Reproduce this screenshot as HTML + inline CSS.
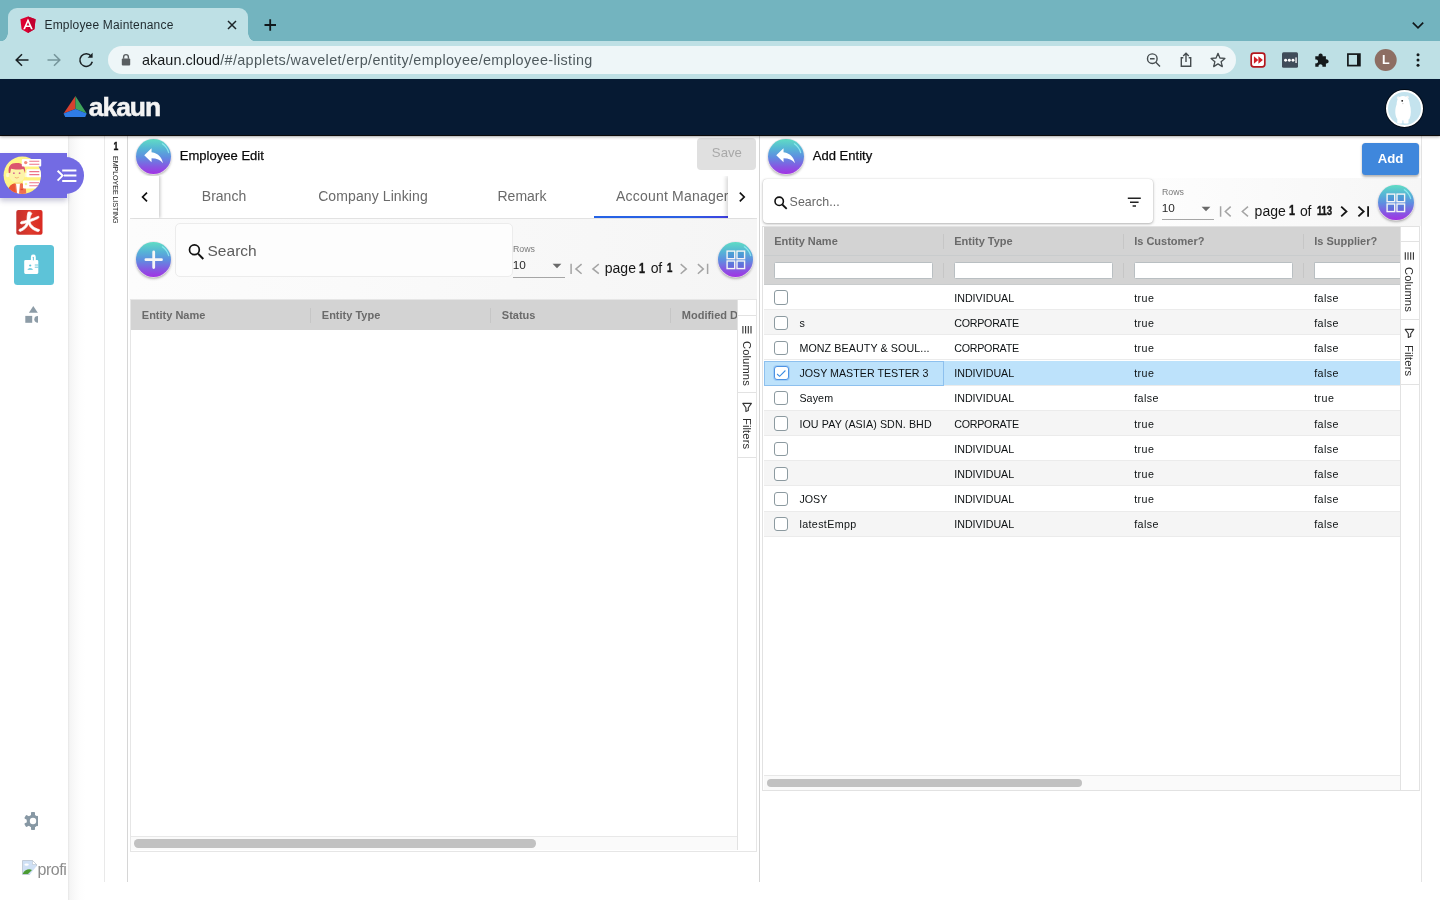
<!DOCTYPE html>
<html lang="en">
<head>
<meta charset="utf-8">
<title>Employee Maintenance</title>
<style>
*{box-sizing:border-box;margin:0;padding:0}
html,body{width:1440px;height:900px;overflow:hidden;background:#fff}
body{font-family:"Liberation Sans",sans-serif;color:#000;position:relative}
.abs{position:absolute}
#stage{position:absolute;left:0;top:0;width:1440px;height:900px;overflow:hidden;background:#fff;will-change:transform}
/* ---------- browser chrome ---------- */
#tabstrip{left:0;top:0;width:1440px;height:42px;background:#73b4bf}
#toolbar{left:0;top:41px;width:1440px;height:38px;background:#bee0e5}
#tab{left:8px;top:8px;width:240px;height:34px;background:#bee0e5;border-radius:9px 9px 0 0}
#tab:before,#tab:after{content:"";position:absolute;bottom:0;width:9px;height:9px}
#tab:before{left:-9px;background:radial-gradient(circle at 0 0,transparent 8.5px,#bee0e5 9px)}
#tab:after{right:-9px;background:radial-gradient(circle at 100% 0,transparent 8.5px,#bee0e5 9px)}
#tabtitle{left:44.5px;top:17px;font-size:12px;line-height:16px;color:#1f2a2e;letter-spacing:.18px;white-space:nowrap}
#urlpill{left:108px;top:46px;width:1128px;height:28px;border-radius:14px;background:#eef6f8}
#url{left:142px;top:51px;font-size:14.4px;line-height:18px;color:#4f5a5e;white-space:nowrap;letter-spacing:.36px}
#url b{font-weight:400;color:#15191b;letter-spacing:.05px}
/* ---------- app header ---------- */
#apphead{left:0;top:79px;width:1440px;height:56.200px;background:#061a33;box-shadow:0 .8px .6px rgba(0,0,0,.95),0 2px 3px rgba(0,0,0,.3);z-index:5}
#brand{z-index:6;left:88.800px;top:91.900px;font-size:26.500px;line-height:30px;font-weight:700;color:#f3f3f3;letter-spacing:-1.050px;white-space:nowrap;-webkit-text-stroke:.55px #f3f3f3;transform:scaleY(.95);transform-origin:0 24.200px}
/* ---------- left rail ---------- */
#rail2{left:68px;top:135px;width:37px;height:765px;background:linear-gradient(90deg,#e4e4e4 0,#efefef 1px,#f5f5f5 2px,#f9f9f9 6px,#fdfdfd 11px,#fff 17px,#fff 100%)}
#railline1{left:104px;top:135px;width:1px;height:747px;background:#e9e9e9}
#railline2{left:127px;top:135px;width:1px;height:747px;background:#d6d6d6}
#vline{left:759px;top:135px;width:1px;height:747px;background:#d4d4d4}
#rline{left:1421px;top:135px;width:1px;height:747px;background:#e4e4e4}

/* ---------- shared widgets ---------- */
.fab{position:absolute;width:35.400px;height:35.400px;border-radius:50%;background:linear-gradient(180deg,#60dcc4 0%,#56b4d6 28%,#5f8de0 52%,#8559e2 78%,#a233e4 100%);box-shadow:0 0 0 .7px rgba(236,228,238,.95),0 1.800px 2.500px rgba(0,0,0,.32)}
.fab svg{position:absolute;left:0;top:0}
.pp{font-family:"Liberation Sans",sans-serif;white-space:nowrap}
.ttl{font-size:13px;line-height:16px;color:#0b0b0b;letter-spacing:.02px;-webkit-text-stroke:.25px #0b0b0b}
.tablbl{font-size:14px;line-height:18px;color:#6a6a6a;top:187.400px}
.pg{font-size:14px;line-height:16px;color:#161616}
.pgb{font-weight:700;font-size:14.500px;transform:scaleX(.74);transform-origin:0 50%;-webkit-text-stroke:.45px #161616}
.hd{background:#d3d3d3}
.hdt{font-size:11px;line-height:14px;font-weight:700;color:#6a6a6a;letter-spacing:0}
.cell{font-size:10.700px;line-height:14px;color:#0e1214}
.cb{width:14.400px;height:14.400px;border:1.200px solid #8c9aa0;border-radius:3px;background:#fff}
.side{font-size:11.200px;line-height:12px;color:#2b2b2b;letter-spacing:.1px}
.vtxt{writing-mode:vertical-rl;white-space:nowrap}
</style>
</head>
<body>
<div id="stage">

<!-- ======= browser chrome ======= -->
<div id="tabstrip" class="abs"></div>
<div id="toolbar" class="abs"></div>
<div id="tab" class="abs"></div>
<div id="tabtitle" class="abs">Employee Maintenance</div>
<div id="urlpill" class="abs"></div>
<div id="url" class="abs"><b>akaun.cloud</b>/#/applets/wavelet/erp/entity/employee/employee-listing</div>

<svg class="abs" style="left:0;top:0" width="1440" height="79" viewBox="0 0 1440 79">
  <!-- angular favicon -->
  <path d="M28 16.5 L35.6 19.2 L34.4 29.3 L28 33 L21.6 29.3 L20.4 19.2 Z" fill="#dd0031"/>
  <path d="M28 16.5 L35.6 19.2 L34.4 29.3 L28 33 Z" fill="#c3002f"/>
  <path d="M28 18.6 L23.2 29.3 H25 L26 26.9 H30 L31 29.3 H32.8 Z M28 22.2 L29.4 25.5 H26.6 Z" fill="#fff" fill-rule="evenodd"/>
  <!-- tab close -->
  <path d="M228 21 L236 29 M236 21 L228 29" stroke="#1d2528" stroke-width="1.5" fill="none"/>
  <!-- new tab plus -->
  <path d="M264.500 25 H276 M270.200 19.300 V30.700" stroke="#10181b" stroke-width="1.800" fill="none"/>
  <!-- tab search chevron -->
  <path d="M1412.800 22.700 L1418 27.800 L1423.200 22.700" stroke="#10181b" stroke-width="1.700" fill="none"/>
  <!-- back -->
  <path d="M28.500 60 H16.500 M22 54.200 L16.200 60 L22 65.800" stroke="#1a2124" stroke-width="1.550" fill="none"/>
  <!-- forward (disabled) -->
  <path d="M47.500 60 H59.500 M54 54.200 L59.800 60 L54 65.800" stroke="#76959b" stroke-width="1.550" fill="none"/>
  <!-- reload -->
  <path d="M91.200 56.200 A6.300 6.300 0 1 0 92.300 61.800" stroke="#1a2124" stroke-width="1.550" fill="none"/>
  <path d="M92.600 52.800 V57.800 H87.600 Z" fill="#1a2124"/>
  <!-- lock -->
  <rect x="121.800" y="58.500" width="8.400" height="7" rx="1" fill="#5a5f62"/>
  <path d="M123.600 58.800 V57 A2.400 2.400 0 0 1 128.400 57 V58.800" stroke="#5a5f62" stroke-width="1.400" fill="none"/>
  <!-- zoom out magnifier -->
  <circle cx="1152.300" cy="58.700" r="4.800" stroke="#454c4f" stroke-width="1.400" fill="none"/>
  <path d="M1155.800 62.300 L1160 66.500 M1150 58.700 H1154.600" stroke="#454c4f" stroke-width="1.400" fill="none"/>
  <!-- share -->
  <path d="M1183.300 57.700 H1181.300 V66.300 H1190.700 V57.700 H1188.700 M1186 62 V53.400 M1183.200 56 L1186 53.200 L1188.800 56" stroke="#454c4f" stroke-width="1.400" fill="none"/>
  <!-- star -->
  <path d="M1218 53.300 L1219.900 58 L1224.900 58.400 L1221.100 61.700 L1222.300 66.600 L1218 63.900 L1213.700 66.600 L1214.900 61.700 L1211.100 58.400 L1216.100 58 Z" stroke="#454c4f" stroke-width="1.300" fill="none" stroke-linejoin="round"/>
  <!-- red extension -->
  <rect x="1251.200" y="53.200" width="13.600" height="13.600" rx="2.600" fill="#fff" stroke="#b3161c" stroke-width="1.700"/>
  <path d="M1253.900 56.300 L1258.300 60 L1253.900 63.700 Z M1258.400 56.300 L1262.900 60 L1258.400 63.700 Z" fill="#d21f26"/>
  <!-- dark extension -->
  <rect x="1282" y="52.300" width="16" height="15.400" rx="1.500" fill="#3f4c5a"/>
  <circle cx="1285.600" cy="60.200" r="1.450" fill="#fff"/><circle cx="1289.300" cy="60.200" r="1.450" fill="#fff"/><circle cx="1293" cy="60.200" r="1.450" fill="#fff"/>
  <rect x="1295.400" y="57.400" width="1.300" height="5.600" fill="#fff"/>
  <!-- puzzle -->
  <path d="M1315.300 56.200 H1318.600 A2.100 2.100 0 1 1 1322.600 56.200 H1325.900 V59.400 A2.100 2.100 0 1 1 1325.900 63.400 V66.800 H1322.400 A2 2 0 1 0 1318.600 66.800 H1315.300 V63.300 A2 2 0 1 0 1315.300 59.600 Z" fill="#14191b"/>
  <!-- side panel -->
  <rect x="1347.900" y="54.100" width="12" height="11.500" stroke="#14191b" stroke-width="1.700" fill="none"/>
  <rect x="1357" y="54.100" width="3" height="11.500" fill="#14191b"/>
  <!-- profile -->
  <circle cx="1385.700" cy="60" r="11" fill="#8d6e63"/>
  <text x="1385.700" y="64.300" text-anchor="middle" font-family="Liberation Sans, sans-serif" font-size="12.500" font-weight="700" fill="#fff">L</text>
  <!-- menu dots -->
  <circle cx="1418" cy="54.700" r="1.500" fill="#14191b"/><circle cx="1418" cy="60" r="1.500" fill="#14191b"/><circle cx="1418" cy="65.300" r="1.500" fill="#14191b"/>
</svg>
<!--CHROME-ICONS-->

<!-- ======= app header ======= -->
<div id="apphead" class="abs"></div>
<div id="brand" class="abs">akaun</div>

<svg class="abs" style="left:60px;top:92px;z-index:6" width="32" height="30" viewBox="60 92 32 30">
  <path d="M75.400 96 L63.600 113.600 L75.500 109 Z" fill="#d8412f"/>
  <path d="M75.400 96 L75.500 109 L86.700 113.600 Z" fill="#3fa35c"/>
  <path d="M63.600 113.600 L75.500 109 L86.700 113.600 L85.200 117 L65.200 117 Z" fill="#2f7ce6"/>
</svg>
<div class="abs" style="z-index:6;left:1385.600px;top:89.800px;width:37px;height:37px;border-radius:50%;background:#c4e3ee;border:2px solid #fff;box-shadow:0 0 0 1px rgba(0,0,0,.55)"></div>
<svg class="abs" style="z-index:6;left:1384.700px;top:89.800px" width="37" height="37" viewBox="0 0 37 37">
  <circle cx="13.300" cy="7.800" r="1.500" fill="#f4f4f4"/><circle cx="22.300" cy="7.300" r="1.500" fill="#f4f4f4"/>
  <path d="M18 6 C22.500 6 24.500 9.500 24.800 14.500 C26.300 19 26.300 25 24.500 28.800 C23 31 13.500 31 12 28.800 C9.800 25 9.800 19 11.600 14.500 C11.900 9.500 13.500 6 18 6 Z" fill="#fff"/>
  <rect x="12.300" y="28.500" width="5" height="5" rx="1.200" fill="#fff"/><rect x="18.500" y="28.500" width="5" height="5" rx="1.200" fill="#fff"/>
  <circle cx="17.200" cy="10.800" r=".9" fill="#111"/>
  <path d="M17 13.600 h1.600" stroke="#bbb" stroke-width=".6"/>
</svg>
<!--HEADER-ICONS-->

<!-- ======= left rail ======= -->
<div id="rail2" class="abs"></div>
<div id="railline1" class="abs"></div>
<div id="railline2" class="abs"></div>
<div id="vline" class="abs"></div>
<div id="rline" class="abs"></div>

<!-- purple active pill -->
<div class="abs" style="left:0;top:153px;width:67.300px;height:44.500px;background:#736be3;box-shadow:0 3px 5px rgba(60,60,120,.28)"></div>
<div class="abs" style="left:40px;top:157.200px;width:44.200px;height:36.400px;background:#736be3;border-radius:0 18.200px 18.200px 0"></div>
<svg class="abs" style="left:0;top:150px" width="90" height="50" viewBox="0 150 90 50">
  <defs>
    <clipPath id="avc"><circle cx="22.300" cy="175.300" r="18.700"/></clipPath>
    <linearGradient id="avg" x1="0" y1="0" x2="1" y2="1"><stop offset="0" stop-color="#fff88e"/><stop offset="1" stop-color="#ffee78"/></linearGradient>
  </defs>
  <circle cx="22.300" cy="175.300" r="18.700" fill="url(#avg)"/>
  <g clip-path="url(#avc)">
    <!-- jacket -->
    <path d="M7.500 194 C8 187 11 183.800 16 183 L21 183 C24.800 183.800 26.200 187 26.200 194 Z" fill="#ef6f4e"/>
    <path d="M8 190 C9 186 11.500 184 14.500 183.400 L16 194 H9 Z" fill="#ea5532"/>
    <path d="M16 183.200 L17.200 194 H19 L20 183.200 Z" fill="#fff"/>
    <rect x="20.500" y="188.800" width="2.600" height="1.300" fill="#e2452f"/>
    <!-- neck/face -->
    <rect x="15.400" y="179" width="5.200" height="5" fill="#fbe08e"/>
    <ellipse cx="7.600" cy="175" rx="1.700" ry="2.200" fill="#fff8c8"/><ellipse cx="25.800" cy="175" rx="1.700" ry="2.200" fill="#fff8c8"/>
    <path d="M9.200 168 H24.600 V175 C24.600 179.800 21 182.200 17 182.200 C13 182.200 9.200 179.800 9.200 175 Z" fill="#fdf3a8"/>
    <!-- hair -->
    <path d="M8.800 173 C7.600 166 11 163 16 163 C21 162.600 26.200 164.800 25 173 L23.400 169 C19 170 14 169.600 11 168.800 L10.200 173 Z" fill="#dc566e"/>
    <circle cx="13.900" cy="173.200" r=".9" fill="#d66a96"/><circle cx="19.600" cy="173.200" r=".9" fill="#d66a96"/>
    <path d="M14.800 177.300 Q16.800 178.800 18.800 177.300" stroke="#f0a070" stroke-width=".8" fill="none"/>
    <!-- cards (clipped) -->
    <rect x="26.500" y="169.300" width="15" height="8" rx="1" fill="#fff"/>
    <path d="M29.300 171.600 H39.300 M29.300 174.600 H39.300" stroke="#ee7488" stroke-width="1.100"/>
    <rect x="23" y="180.500" width="18" height="8" rx="1" fill="#fff"/>
    <circle cx="26" cy="184" r="1.300" fill="#f3f7a0"/>
    <path d="M29.300 182.800 H39.300 M29.300 185.700 H39.300" stroke="#ee7488" stroke-width="1.100"/>
  </g>
  <!-- top card (not clipped) -->
  <rect x="21.800" y="159" width="19.400" height="7.500" rx="1" fill="#fff"/>
  <circle cx="25.700" cy="162.600" r="1.700" fill="#f48a78"/>
  <path d="M29.300 161.300 H39.300 M29.300 164.200 H39.300" stroke="#ee7488" stroke-width="1.100"/>
  <!-- menu-open icon -->
  <path d="M57.600 170.700 L62.600 175.600 L57.600 180.600" stroke="#fff" stroke-width="1.900" fill="none"/>
  <path d="M62.200 170.400 H76.400 M64 175.600 H76.400 M62.200 180.900 H76.400" stroke="#fff" stroke-width="2" fill="none"/>
</svg>
<!-- red app icon -->
<svg class="abs" style="left:16px;top:209px" width="28" height="27" viewBox="16 209 28 27">
  <defs><linearGradient id="rdg" x1="0" y1="0" x2="1" y2="0"><stop offset="0" stop-color="#c5302c"/><stop offset=".55" stop-color="#de3a2c"/><stop offset="1" stop-color="#d92a22"/></linearGradient></defs>
  <rect x="16.300" y="210" width="26.200" height="24.800" rx="2" fill="url(#rdg)"/>
  <path d="M28 212.200 C29.800 211.400 31.500 212.200 31.800 213.600 C30.400 215.600 30 217.600 29.800 219.400 C32.800 218.600 35.800 217.200 38.600 216.200 C39.400 217 38.800 218 37.800 218.600 C35.200 219.800 32.600 220.800 30 221.800 C30.800 225.600 34.600 228.200 39.400 229.600 C39.800 230.800 39 231.800 37.600 231.600 C33.400 230.400 29.800 227.600 28.400 223.800 C27.200 227.200 24.400 230 20.400 231.400 C19 231.400 18.600 230.200 19.200 229.400 C23 228.200 25.400 225.800 26.400 222.800 C24.600 223.400 22.800 223.800 21.200 224 C20 223.200 20.400 221.800 21.600 221.400 C23.400 221.200 25.200 220.800 27 220.200 C27 217.400 27.200 214.600 28 212.200 Z" fill="#fff" stroke="#fff" stroke-width=".7" stroke-linejoin="round"/>
</svg>
<!-- teal active applet -->
<div class="abs" style="left:13.900px;top:244.800px;width:40px;height:40px;border-radius:3.500px;background:#5dc3d8"></div>
<svg class="abs" style="left:20px;top:252px" width="24" height="26" viewBox="20 252 24 26">
  <path d="M25.500 260 H30.900 V257 A2.450 2.450 0 0 1 35.800 257 V260 H37 A1.300 1.300 0 0 1 38.300 261.300 V272.600 A1.300 1.300 0 0 1 37 273.900 H25.500 A1.300 1.300 0 0 1 24.200 272.600 V261.300 A1.300 1.300 0 0 1 25.500 260 Z" fill="#fff"/>
  <rect x="32.900" y="256.800" width=".9" height="3.600" rx=".4" fill="#5dc3d8"/>
  <circle cx="30.200" cy="265.500" r="1.100" fill="#5dc3d8"/>
  <path d="M27.600 269.700 C27.600 267.700 32.800 267.700 32.800 269.700 Z" fill="#5dc3d8"/>
  <path d="M34.800 265 H38.300 M34.800 267.200 H38.300" stroke="#5dc3d8" stroke-width=".9"/>
</svg>
<!-- shapes icon -->
<svg class="abs" style="left:24px;top:304px" width="16" height="20" viewBox="24 304 16 20">
  <path d="M33.300 305.900 L37.800 312.800 H28.900 Z" fill="#8d9ca7"/>
  <rect x="25.300" y="315.900" width="6.900" height="6.900" fill="#8d9ca7"/>
  <path d="M38 315.900 A3.700 3.450 0 0 0 38 322.800 Z" fill="#8d9ca7"/>
</svg>
<!-- settings gear -->
<svg class="abs" style="left:22px;top:810px" width="16.400" height="22" viewBox="-11 -11 16.400 22">
  <g fill="#8798a4">
    <circle r="6.300"/>
    <g id="gt"><rect x="-2" y="-9" width="4" height="4.500" rx=".8"/></g>
    <use href="#gt" transform="rotate(60)"/><use href="#gt" transform="rotate(120)"/><use href="#gt" transform="rotate(180)"/><use href="#gt" transform="rotate(240)"/><use href="#gt" transform="rotate(300)"/>
  </g>
  <circle r="3.200" fill="#fff"/>
</svg>
<!-- broken profile image -->
<svg class="abs" style="left:22px;top:859.600px" width="16" height="16" viewBox="0 0 16 16">
  <path d="M.5 .5 H10.500 L14.500 4.500 V14.500 H.5 Z" fill="#cfe0f5" stroke="#b9c3cf" stroke-width=".8"/>
  <path d="M10.500 .5 V4.500 H14.500 Z" fill="#fff" stroke="#b9c3cf" stroke-width=".6"/>
  <ellipse cx="4.600" cy="4.600" rx="2.200" ry="1.200" fill="#fff"/>
  <path d="M.9 13.200 C3 9.500 7 8.300 10 10 L6 14.100 H.9 Z" fill="#4b9b33"/>
  <path d="M15 5.500 L7.500 14.900 H15 Z" fill="#fff"/>
</svg>
<div class="abs" style="left:37.600px;top:859px;width:29.400px;height:24px;overflow:hidden;font-size:16px;line-height:22px;color:#8c8c8c;white-space:nowrap;letter-spacing:-.5px">profile</div>
<!-- vertical breadcrumb -->
<div class="abs" style="left:109.700px;top:139px;width:12px;text-align:center;font-size:11.500px;line-height:14px;font-weight:700;color:#111;transform:scaleX(.75);-webkit-text-stroke:.4px #111">1</div>
<div class="abs vtxt" style="left:109.500px;top:155.500px;width:11px;font-size:7.200px;line-height:11px;color:#222;letter-spacing:-.12px">EMPLOYEE LISTING</div>
<!--RAIL-->


<!-- ======= LEFT PANEL : Employee Edit ======= -->
<div class="abs" style="left:129px;top:219px;width:628px;height:81px;background:linear-gradient(90deg,#fcfcfc 0,#fafafa 35%,#f5f5f5 100%)"></div>
<div class="fab" style="left:135.800px;top:138.600px"><svg width="35.400" height="35.400" viewBox="0 0 35.400 35.400"><path d="M26.370 4.850 A15.500 15.500 0 0 1 32.670 13.690" stroke="rgba(160,250,250,.7)" stroke-width="1.200" stroke-linecap="round" fill="none"/><path transform="translate(5.100 4.300) scale(1.045 1)" d="M10 9V5l-7 7 7 7v-4.100c5 0 8.500 1.600 11 5.100-1-5-4-10-11-11z" fill="#fff"/></svg></div>
<div class="abs pp ttl" style="left:179.800px;top:148px">Employee Edit</div>
<div class="abs" style="left:697.300px;top:137.800px;width:59.200px;height:32px;border-radius:4px;background:#e0e0e0"></div>
<div class="abs pp" style="left:697.300px;top:145px;width:59.200px;text-align:center;font-size:13.200px;line-height:16px;color:#a9a9a9">Save</div>
<!-- tabs -->
<div class="abs pp tablbl" style="left:174px;width:100px;text-align:center">Branch</div>
<div class="abs pp tablbl" style="left:303px;width:140px;text-align:center;letter-spacing:.1px">Company Linking</div>
<div class="abs pp tablbl" style="left:472px;width:100px;text-align:center">Remark</div>
<div class="abs pp tablbl" style="left:616px;width:111.800px;overflow:hidden;letter-spacing:.2px">Account Manager</div>
<div class="abs" style="left:130px;top:218.200px;width:627px;height:1px;background:#e2e2e2"></div>
<div class="abs" style="left:594.300px;top:216.400px;width:133.500px;height:1.800px;background:linear-gradient(90deg,#2563e6 0,#2b5fe3 70%,#3f3fe0 100%)"></div>
<div class="abs" style="left:130px;top:176px;width:29px;height:42.200px;background:#fff;box-shadow:1.500px 0 3px rgba(0,0,0,.2);clip-path:inset(0 -8px 0 0)"></div>
<div class="abs" style="left:727.800px;top:176px;width:29.200px;height:42.200px;background:#fff;box-shadow:-2px 0 4px rgba(0,0,0,.16);clip-path:inset(0 0 0 -10px)"></div>
<svg class="abs" style="left:138px;top:190px" width="14" height="14" viewBox="138 190 14 14"><path d="M147 192.600 L142.600 197 L147 201.400" stroke="#111" stroke-width="1.700" fill="none"/></svg>
<svg class="abs" style="left:735px;top:190px" width="14" height="14" viewBox="735 190 14 14"><path d="M739.800 192.600 L744.200 197 L739.800 201.400" stroke="#111" stroke-width="1.700" fill="none"/></svg>
<!-- toolbar -->
<div class="fab" style="left:135.800px;top:241.800px"><svg width="35.400" height="35.400" viewBox="0 0 35.400 35.400"><path d="M26.370 4.850 A15.500 15.500 0 0 1 32.670 13.690" stroke="rgba(160,250,250,.7)" stroke-width="1.200" stroke-linecap="round" fill="none"/><path d="M9.900 17.700 H25.500 M17.700 9.900 V25.500" stroke="#f6f6f6" stroke-width="2.800" stroke-linecap="round" fill="none"/></svg></div>
<div class="abs" style="left:175.200px;top:223.200px;width:338px;height:53.600px;border:1px solid #ececec;border-radius:5px;background:#fdfdfd"></div>
<svg class="abs" style="left:186px;top:242px" width="20" height="20" viewBox="186 242 20 20"><circle cx="194.400" cy="249.800" r="4.900" stroke="#111" stroke-width="1.700" fill="none"/><path d="M198 253.600 L203.300 259" stroke="#111" stroke-width="2" fill="none"/></svg>
<div class="abs pp" style="left:207.500px;top:241px;font-size:15.500px;line-height:19px;color:#5c5c5c;letter-spacing:.02px">Search</div>
<div class="abs pp" style="left:513px;top:243.500px;font-size:8.800px;line-height:10px;color:#7a7a7a">Rows</div>
<div class="abs pp" style="left:512.800px;top:258.300px;font-size:11.800px;line-height:14px;color:#2a2a2a;letter-spacing:-.2px">10</div>
<svg class="abs" style="left:551px;top:262px" width="12" height="8" viewBox="551 262 12 8"><path d="M552.600 263.800 H561.400 L557 268.200 Z" fill="#6a6a6a"/></svg>
<div class="abs" style="left:513px;top:276.500px;width:52px;height:1.200px;background:#a6a6a6"></div>
<svg class="abs" style="left:566px;top:258px" width="150" height="22" viewBox="566 258 150 22">
  <path d="M571.100 263.800 V274.000 M581.600 264.100 L575.900 268.900 L581.600 273.700" stroke="#a4a4a4" stroke-width="1.500" fill="none"/>
  <path d="M598.800 264.100 L592.900 268.900 L598.800 273.700" stroke="#a4a4a4" stroke-width="1.500" fill="none"/>
  <path d="M680.700 264.100 L686.300 268.900 L680.700 273.700" stroke="#a4a4a4" stroke-width="1.500" fill="none"/>
  <path d="M697.900 264.100 L703.300 268.900 L697.900 273.700 M707.600 263.800 V274.000" stroke="#a4a4a4" stroke-width="1.500" fill="none"/>
</svg>
<div class="abs pp pg" style="left:604.800px;top:259.900px">page</div>
<div class="abs pp pg pgb" style="left:638.600px;top:259.800px">1</div>
<div class="abs pp pg" style="left:650.800px;top:259.900px;letter-spacing:-.4px">of</div>
<div class="abs pp pg pgb" style="left:667px;top:260.200px;font-size:13px">1</div>
<div class="fab" style="left:717.600px;top:242px"><svg width="35.400" height="35.400" viewBox="0 0 35.400 35.400"><path d="M26.370 4.850 A15.500 15.500 0 0 1 32.670 13.690" stroke="rgba(160,250,250,.7)" stroke-width="1.200" stroke-linecap="round" fill="none"/><g stroke="#f4f4f4" stroke-width="1.400" fill="rgba(40,110,200,.22)"><rect x="9.100" y="9.100" width="7.600" height="7.600"/><rect x="19" y="9.100" width="7.600" height="7.600"/><rect x="9.100" y="19" width="7.600" height="7.600"/><rect x="19" y="19" width="7.600" height="7.600"/></g></svg></div>
<!-- grid -->
<div class="abs" style="left:129.700px;top:299.400px;width:627.500px;height:552.600px;border:1px solid #e6e6e6;background:#fff"></div>
<div class="abs hd" style="left:130.700px;top:300.400px;width:606.800px;height:29.200px"></div>
<div class="abs" style="left:310px;top:307.500px;width:1px;height:15px;background:#c6c6c6"></div>
<div class="abs" style="left:490px;top:307.500px;width:1px;height:15px;background:#c6c6c6"></div>
<div class="abs" style="left:670px;top:307.500px;width:1px;height:15px;background:#c6c6c6"></div>
<div class="abs pp hdt" style="left:141.800px;top:308px">Entity Name</div>
<div class="abs pp hdt" style="left:321.800px;top:308px">Entity Type</div>
<div class="abs pp hdt" style="left:501.800px;top:308px">Status</div>
<div class="abs pp hdt" style="left:681.800px;top:308px;width:55.600px;overflow:hidden">Modified Date</div>
<!-- side buttons -->
<div class="abs" style="left:737.400px;top:300.400px;width:1px;height:550px;background:#e2e2e2"></div>
<div class="abs" style="left:738.400px;top:315.400px;width:17.600px;height:1px;background:#e2e2e2"></div>
<div class="abs" style="left:738.400px;top:392.400px;width:17.600px;height:1px;background:#e2e2e2"></div>
<div class="abs" style="left:738.400px;top:457.400px;width:17.600px;height:1px;background:#e2e2e2"></div>
<svg class="abs" style="left:741px;top:325px" width="12" height="10" viewBox="741 325 12 10"><path d="M742.900 326 V333.600 M745.600 326 V333.600 M748.300 326 V333.600 M751 326 V333.600" stroke="#333" stroke-width="1.100" fill="none"/></svg>
<div class="abs vtxt side" style="left:740.800px;top:340.800px;width:12px">Columns</div>
<svg class="abs" style="left:741px;top:401px" width="12" height="12" viewBox="741 401 12 12"><path d="M742.800 403.400 H751.400 L748.300 407.700 V410.600 L745.900 411.500 V407.700 Z" stroke="#333" stroke-width="1.100" fill="none" stroke-linejoin="round"/></svg>
<div class="abs vtxt side" style="left:740.800px;top:418.400px;width:12px">Filters</div>
<!-- h scrollbar -->
<div class="abs" style="left:130.700px;top:835.800px;width:606.800px;height:14.600px;background:#fafafa;border-top:1px solid #e8e8e8"></div>
<div class="abs" style="left:134px;top:839.400px;width:402.300px;height:8.400px;border-radius:4.200px;background:#c1c1c1"></div>
<!--LEFTPANEL-->


<!-- ======= RIGHT PANEL : Add Entity ======= -->
<div class="abs" style="left:1153px;top:178px;width:268px;height:48px;background:linear-gradient(90deg,#fdfdfd 0,#f6f6f6 100%)"></div>
<div class="fab" style="left:768.300px;top:138.800px"><svg width="35.400" height="35.400" viewBox="0 0 35.400 35.400"><path d="M26.370 4.850 A15.500 15.500 0 0 1 32.670 13.690" stroke="rgba(160,250,250,.7)" stroke-width="1.200" stroke-linecap="round" fill="none"/><path transform="translate(5.100 4.300) scale(1.045 1)" d="M10 9V5l-7 7 7 7v-4.100c5 0 8.500 1.600 11 5.100-1-5-4-10-11-11z" fill="#fff"/></svg></div>
<div class="abs pp ttl" style="left:812.800px;top:148px">Add Entity</div>
<div class="abs" style="left:1362px;top:143px;width:57.200px;height:32px;border-radius:3.500px;background:#3f87dc;box-shadow:0 1.500px 2.500px rgba(0,0,0,.3)"></div>
<div class="abs pp" style="left:1362px;top:150.500px;width:57.200px;text-align:center;font-size:13.200px;line-height:16px;font-weight:700;color:#fff">Add</div>
<!-- search card -->
<div class="abs" style="left:762.800px;top:178.800px;width:390.600px;height:43.800px;border-radius:4px;background:#fff;box-shadow:0 1px 3px rgba(0,0,0,.3),0 0 1px rgba(0,0,0,.2)"></div>
<svg class="abs" style="left:772px;top:194px" width="18" height="18" viewBox="772 194 18 18"><circle cx="779.200" cy="201.300" r="4.200" stroke="#111" stroke-width="1.600" fill="none"/><path d="M782.300 204.500 L786.700 208.900" stroke="#111" stroke-width="1.800" fill="none"/></svg>
<div class="abs pp" style="left:789.600px;top:193.500px;font-size:12.400px;line-height:16px;color:#666;letter-spacing:.05px">Search...</div>
<svg class="abs" style="left:1126px;top:195px" width="16" height="14" viewBox="1126 195 16 14"><path d="M1127.800 198.300 H1140.800 M1130 202.200 H1138.600 M1132.600 206 H1136" stroke="#222" stroke-width="1.400" fill="none"/></svg>
<!-- rows + paginator -->
<div class="abs pp" style="left:1162px;top:186.500px;font-size:8.800px;line-height:10px;color:#7a7a7a">Rows</div>
<div class="abs pp" style="left:1161.800px;top:201.300px;font-size:11.800px;line-height:14px;color:#2a2a2a;letter-spacing:-.2px">10</div>
<svg class="abs" style="left:1200px;top:205px" width="12" height="8" viewBox="1200 205 12 8"><path d="M1201.600 206.800 H1210.400 L1206 211.200 Z" fill="#6a6a6a"/></svg>
<div class="abs" style="left:1162px;top:219.300px;width:52px;height:1.200px;background:#a6a6a6"></div>
<svg class="abs" style="left:1215px;top:201px" width="160" height="22" viewBox="1215 201 160 22">
  <path d="M1220.600 206.300 V216.700 M1230.700 206.600 L1225.300 211.500 L1230.700 216.400" stroke="#a4a4a4" stroke-width="1.500" fill="none"/>
  <path d="M1248.000 206.600 L1242.300 211.500 L1248.000 216.400" stroke="#a4a4a4" stroke-width="1.500" fill="none"/>
  <path d="M1341.200 206.600 L1346.500 211.500 L1341.200 216.400" stroke="#151515" stroke-width="1.800" fill="none"/>
  <path d="M1358.400 206.600 L1363.700 211.500 L1358.400 216.400 M1368.100 206.300 V216.700" stroke="#151515" stroke-width="1.800" fill="none"/>
</svg>
<div class="abs pp pg" style="left:1254.600px;top:202.700px">page</div>
<div class="abs pp pg pgb" style="left:1288.600px;top:202.400px">1</div>
<div class="abs pp pg" style="left:1300px;top:202.700px;letter-spacing:-.4px">of</div>
<div class="abs pp pg pgb" style="left:1316.600px;top:203.200px;font-size:13px;letter-spacing:-.3px">113</div>
<div class="fab" style="left:1378.300px;top:185px"><svg width="35.400" height="35.400" viewBox="0 0 35.400 35.400"><path d="M26.370 4.850 A15.500 15.500 0 0 1 32.670 13.690" stroke="rgba(160,250,250,.7)" stroke-width="1.200" stroke-linecap="round" fill="none"/><g stroke="#f4f4f4" stroke-width="1.400" fill="rgba(40,110,200,.22)"><rect x="9.100" y="9.100" width="7.600" height="7.600"/><rect x="19" y="9.100" width="7.600" height="7.600"/><rect x="9.100" y="19" width="7.600" height="7.600"/><rect x="19" y="19" width="7.600" height="7.600"/></g></svg></div>
<!-- grid frame -->
<div class="abs" style="left:762px;top:226px;width:658px;height:564.600px;border:1px solid #e2e2e2;background:#fff"></div>
<div class="abs hd" style="left:763.600px;top:227px;width:636.400px;height:57.900px"></div>
<div class="abs" style="left:763.600px;top:255.400px;width:636.400px;height:1px;background:#c9cccd"></div>
<div class="abs" style="left:763.600px;top:284px;width:636.400px;height:1px;background:#c9cccd"></div>
<div class="abs" style="left:943px;top:234px;width:1px;height:15px;background:#c6c6c6"></div>
<div class="abs" style="left:1123px;top:234px;width:1px;height:15px;background:#c6c6c6"></div>
<div class="abs" style="left:1303px;top:234px;width:1px;height:15px;background:#c6c6c6"></div>
<div class="abs" style="left:943px;top:262.500px;width:1px;height:15px;background:#c6c6c6"></div>
<div class="abs" style="left:1123px;top:262.500px;width:1px;height:15px;background:#c6c6c6"></div>
<div class="abs" style="left:1303px;top:262.500px;width:1px;height:15px;background:#c6c6c6"></div>
<div class="abs pp hdt" style="left:774.200px;top:233.700px">Entity Name</div>
<div class="abs pp hdt" style="left:954.200px;top:233.700px">Entity Type</div>
<div class="abs pp hdt" style="left:1134.200px;top:233.700px">Is Customer?</div>
<div class="abs pp hdt" style="left:1314.200px;top:233.700px">Is Supplier?</div>
<div class="abs" style="left:774px;top:261.700px;width:158.800px;height:17px;background:#fff;border:1px solid #b9bfc2;border-radius:1.500px"></div>
<div class="abs" style="left:954px;top:261.700px;width:158.800px;height:17px;background:#fff;border:1px solid #b9bfc2;border-radius:1.500px"></div>
<div class="abs" style="left:1134px;top:261.700px;width:158.800px;height:17px;background:#fff;border:1px solid #b9bfc2;border-radius:1.500px"></div>
<div class="abs" style="left:1314px;top:261.700px;width:86px;height:17px;background:#fff;border:1px solid #b9bfc2;border-right:0;border-radius:1.500px 0 0 1.500px"></div>
<!-- rows -->
<div class="abs" style="left:763.600px;top:284.9px;width:636.400px;height:25.2px;background:#fff;border-bottom:1px solid #ebebeb"></div>
<div class="abs cb" style="left:774px;top:290.3px"></div>
<div class="abs cell" style="left:954.200px;top:290.5px;white-space:nowrap">INDIVIDUAL</div>
<div class="abs cell" style="left:1134.200px;top:290.5px;white-space:nowrap;letter-spacing:.45px">true</div>
<div class="abs cell" style="left:1314.200px;top:290.5px;white-space:nowrap;letter-spacing:.4px">false</div>
<div class="abs" style="left:763.600px;top:310.1px;width:636.400px;height:25.2px;background:#f5f5f5;border-bottom:1px solid #ebebeb"></div>
<div class="abs cb" style="left:774px;top:315.5px"></div>
<div class="abs cell" style="left:799.400px;top:315.7px;white-space:nowrap">s</div>
<div class="abs cell" style="left:954.200px;top:315.7px;white-space:nowrap;letter-spacing:-.25px">CORPORATE</div>
<div class="abs cell" style="left:1134.200px;top:315.7px;white-space:nowrap;letter-spacing:.45px">true</div>
<div class="abs cell" style="left:1314.200px;top:315.7px;white-space:nowrap;letter-spacing:.4px">false</div>
<div class="abs" style="left:763.600px;top:335.3px;width:636.400px;height:25.2px;background:#fff;border-bottom:1px solid #ebebeb"></div>
<div class="abs cb" style="left:774px;top:340.7px"></div>
<div class="abs cell" style="left:799.400px;top:340.9px;white-space:nowrap;letter-spacing:.1px">MONZ BEAUTY &amp; SOUL...</div>
<div class="abs cell" style="left:954.200px;top:340.9px;white-space:nowrap;letter-spacing:-.25px">CORPORATE</div>
<div class="abs cell" style="left:1134.200px;top:340.9px;white-space:nowrap;letter-spacing:.45px">true</div>
<div class="abs cell" style="left:1314.200px;top:340.9px;white-space:nowrap;letter-spacing:.4px">false</div>
<div class="abs" style="left:763.600px;top:360.5px;width:636.400px;height:25.2px;background:#bde2fb;border-bottom:1px solid #ebebeb"></div>
<div class="abs" style="left:763.600px;top:360.5px;width:180px;height:25.2px;border:1px solid #8dc0ee"></div>
<div class="abs cb" style="left:773.900px;top:365.9px;width:14.800px;height:14.600px;border:1.300px solid #4d92e3;box-shadow:0 0 0 1px rgba(110,170,235,.35)"></div>
<svg class="abs" style="left:774px;top:365.9px" width="14.400" height="14.400" viewBox="0 0 14.400 14.400"><path d="M3.100 8 L5.600 10.300 L11.400 4.500" stroke="#3a8be2" stroke-width="1.100" fill="none"/></svg>
<div class="abs cell" style="left:799.400px;top:366.1px;white-space:nowrap">JOSY MASTER TESTER 3</div>
<div class="abs cell" style="left:954.200px;top:366.1px;white-space:nowrap">INDIVIDUAL</div>
<div class="abs cell" style="left:1134.200px;top:366.1px;white-space:nowrap;letter-spacing:.45px">true</div>
<div class="abs cell" style="left:1314.200px;top:366.1px;white-space:nowrap;letter-spacing:.4px">false</div>
<div class="abs" style="left:763.600px;top:385.7px;width:636.400px;height:25.2px;background:#fff;border-bottom:1px solid #ebebeb"></div>
<div class="abs cb" style="left:774px;top:391.1px"></div>
<div class="abs cell" style="left:799.400px;top:391.3px;white-space:nowrap;letter-spacing:.1px">Sayem</div>
<div class="abs cell" style="left:954.200px;top:391.3px;white-space:nowrap">INDIVIDUAL</div>
<div class="abs cell" style="left:1134.200px;top:391.3px;white-space:nowrap;letter-spacing:.4px">false</div>
<div class="abs cell" style="left:1314.200px;top:391.3px;white-space:nowrap;letter-spacing:.45px">true</div>
<div class="abs" style="left:763.600px;top:410.9px;width:636.400px;height:25.2px;background:#f5f5f5;border-bottom:1px solid #ebebeb"></div>
<div class="abs cb" style="left:774px;top:416.3px"></div>
<div class="abs cell" style="left:799.400px;top:416.5px;white-space:nowrap;letter-spacing:.1px">IOU PAY (ASIA) SDN. BHD</div>
<div class="abs cell" style="left:954.200px;top:416.5px;white-space:nowrap;letter-spacing:-.25px">CORPORATE</div>
<div class="abs cell" style="left:1134.200px;top:416.5px;white-space:nowrap;letter-spacing:.45px">true</div>
<div class="abs cell" style="left:1314.200px;top:416.5px;white-space:nowrap;letter-spacing:.4px">false</div>
<div class="abs" style="left:763.600px;top:436.1px;width:636.400px;height:25.2px;background:#fff;border-bottom:1px solid #ebebeb"></div>
<div class="abs cb" style="left:774px;top:441.5px"></div>
<div class="abs cell" style="left:954.200px;top:441.7px;white-space:nowrap">INDIVIDUAL</div>
<div class="abs cell" style="left:1134.200px;top:441.7px;white-space:nowrap;letter-spacing:.45px">true</div>
<div class="abs cell" style="left:1314.200px;top:441.7px;white-space:nowrap;letter-spacing:.4px">false</div>
<div class="abs" style="left:763.600px;top:461.3px;width:636.400px;height:25.2px;background:#f5f5f5;border-bottom:1px solid #ebebeb"></div>
<div class="abs cb" style="left:774px;top:466.7px"></div>
<div class="abs cell" style="left:954.200px;top:466.9px;white-space:nowrap">INDIVIDUAL</div>
<div class="abs cell" style="left:1134.200px;top:466.9px;white-space:nowrap;letter-spacing:.45px">true</div>
<div class="abs cell" style="left:1314.200px;top:466.9px;white-space:nowrap;letter-spacing:.4px">false</div>
<div class="abs" style="left:763.600px;top:486.5px;width:636.400px;height:25.2px;background:#fff;border-bottom:1px solid #ebebeb"></div>
<div class="abs cb" style="left:774px;top:491.9px"></div>
<div class="abs cell" style="left:799.400px;top:492.1px;white-space:nowrap">JOSY</div>
<div class="abs cell" style="left:954.200px;top:492.1px;white-space:nowrap">INDIVIDUAL</div>
<div class="abs cell" style="left:1134.200px;top:492.1px;white-space:nowrap;letter-spacing:.45px">true</div>
<div class="abs cell" style="left:1314.200px;top:492.1px;white-space:nowrap;letter-spacing:.4px">false</div>
<div class="abs" style="left:763.600px;top:511.7px;width:636.400px;height:25.2px;background:#f5f5f5;border-bottom:1px solid #ebebeb"></div>
<div class="abs cb" style="left:774px;top:517.1px"></div>
<div class="abs cell" style="left:799.400px;top:517.3px;white-space:nowrap;letter-spacing:.38px">latestEmpp</div>
<div class="abs cell" style="left:954.200px;top:517.3px;white-space:nowrap">INDIVIDUAL</div>
<div class="abs cell" style="left:1134.200px;top:517.3px;white-space:nowrap;letter-spacing:.4px">false</div>
<div class="abs cell" style="left:1314.200px;top:517.3px;white-space:nowrap;letter-spacing:.4px">false</div>
<!-- side buttons -->
<div class="abs" style="left:1400px;top:227px;width:19px;height:562.600px;background:#fff;border-left:1px solid #e2e2e2"></div>
<div class="abs" style="left:1401px;top:241px;width:18px;height:1px;background:#e2e2e2"></div>
<div class="abs" style="left:1401px;top:319px;width:18px;height:1px;background:#e2e2e2"></div>
<div class="abs" style="left:1401px;top:383.600px;width:18px;height:1px;background:#e2e2e2"></div>
<svg class="abs" style="left:1403px;top:251px" width="12" height="10" viewBox="1403 251 12 10"><path d="M1405.300 252.200 V259.800 M1408 252.200 V259.800 M1410.700 252.200 V259.800 M1413.400 252.200 V259.800" stroke="#333" stroke-width="1.100" fill="none"/></svg>
<div class="abs vtxt side" style="left:1403.200px;top:267px;width:12px">Columns</div>
<svg class="abs" style="left:1403px;top:327px" width="12" height="12" viewBox="1403 327 12 12"><path d="M1405.200 329.400 H1413.800 L1410.700 333.700 V336.600 L1408.300 337.500 V333.700 Z" stroke="#333" stroke-width="1.100" fill="none" stroke-linejoin="round"/></svg>
<div class="abs vtxt side" style="left:1403.200px;top:344.600px;width:12px">Filters</div>
<!-- h scrollbar -->
<div class="abs" style="left:763.600px;top:775.200px;width:636.400px;height:14.400px;background:#fafafa;border-top:1px solid #e8e8e8"></div>
<div class="abs" style="left:766.800px;top:778.800px;width:315px;height:8.200px;border-radius:4.100px;background:#c1c1c1"></div>
<!--RIGHTPANEL-->

</div>
</body>
</html>
